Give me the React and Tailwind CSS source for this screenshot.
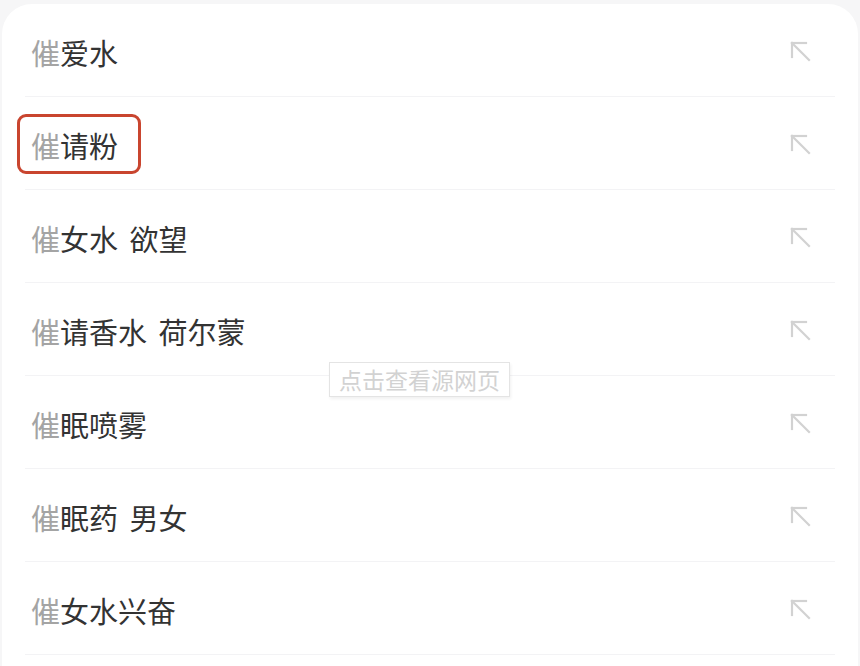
const items = [
  { rest: "爱水" },
  { rest: "请粉", marked: true },
  { rest: "女水 欲望" },
  { rest: "请香水 荷尔蒙" },
  { rest: "眠喷雾" },
  { rest: "眠药 男女" },
  { rest: "女水兴奋" },
];

function ArrowUpLeft() {
  return (
    <svg width="26" height="26" viewBox="0 0 26 26" fill="none" stroke="#d2d2d2" strokeWidth="2.2" strokeLinecap="square">
      <path d="M4 4 L21 21" />
      <path d="M4 4 L4 18" />
      <path d="M4 4 L18 4" />
    </svg>
  );
}

export default function App() {
  return (
    <div
      className="relative w-[860px] h-[666px] overflow-hidden bg-[#f6f6f7]"
      style={{ fontFamily: '"Noto Sans CJK SC", "Noto Sans", sans-serif' }}
    >
      <div className="mt-[4px] h-[700px] rounded-t-[30px] bg-white mx-[2px]">
        {items.map((it, i) => (
          <div key={i} className="mx-[23px] h-[93px] flex items-center justify-between border-b border-[#f3f3f5]">
            <div className="relative ml-[6px] mt-[4px] text-[29px] leading-none [word-spacing:5px]">
              <span className="text-[#a4a4a4]">催</span>
              <span className="text-[#333333]">{it.rest}</span>
              {it.marked && (
                <div className="absolute left-[-14px] top-[-17px] w-[124px] h-[60px] rounded-[9px] border-[3px] border-[#c9452f]" />
              )}
            </div>
            <div className="mr-[21px] mt-[4px]">
              <ArrowUpLeft />
            </div>
          </div>
        ))}
      </div>
      <div className="absolute left-[329px] top-[362px] w-[181px] h-[35px] border border-[#e4e4e4] bg-white flex items-center justify-center text-[23px] text-[#d2d2d2] leading-none shadow-[1px_2px_3px_rgba(0,0,0,0.06)]">
        点击查看源网页
      </div>
    </div>
  );
}
